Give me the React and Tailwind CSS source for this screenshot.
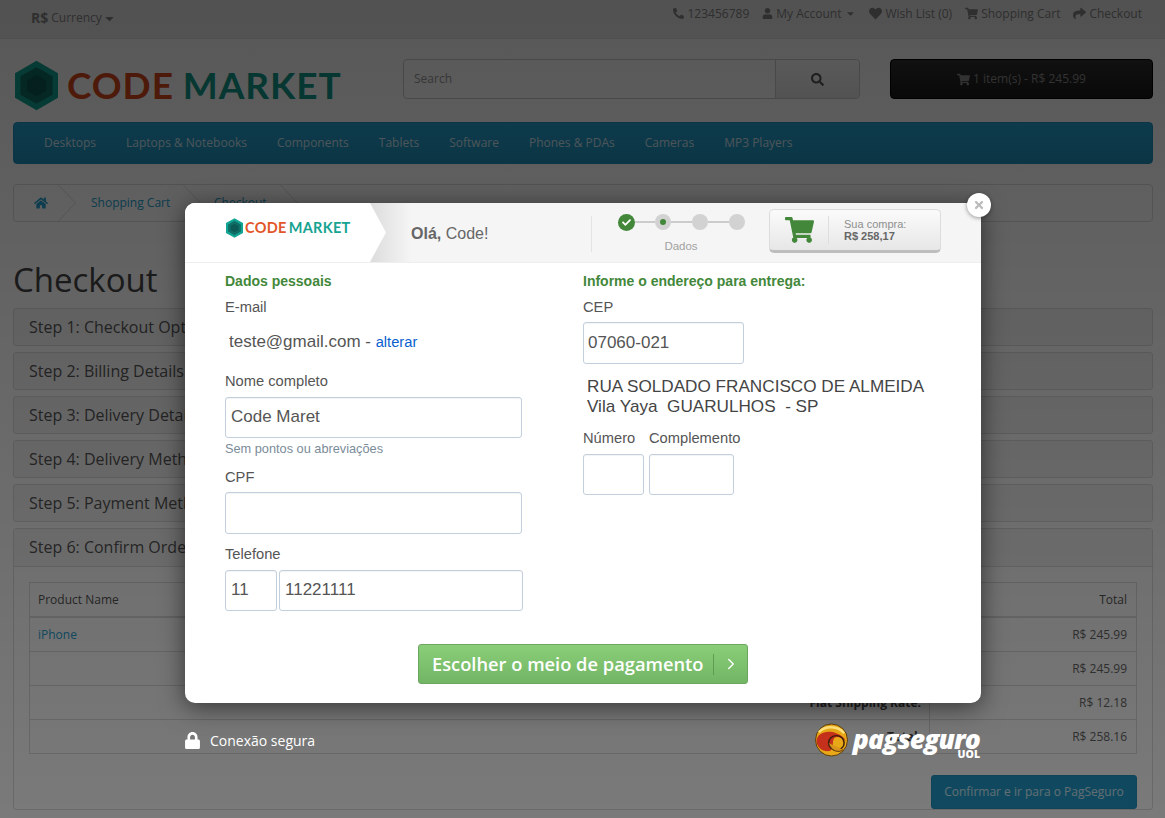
import { ChevronRight } from "lucide-react";
import { FaPhone, FaUser, FaHeart, FaShoppingCart, FaShare, FaHome, FaSearch, FaCheck, FaLock, FaCaretDown, FaTimes } from "react-icons/fa";

const menu = ["Desktops", "Laptops & Notebooks", "Components", "Tablets", "Software", "Phones & PDAs", "Cameras", "MP3 Players"];
const steps = ["Step 1: Checkout Options", "Step 2: Billing Details", "Step 3: Delivery Details", "Step 4: Delivery Method", "Step 5: Payment Method"];
const totals = [
  ["Sub-Total:", "R$ 245.99", "h-[34px] border-b border-[#dddddd]"],
  ["Flat Shipping Rate:", "R$ 12.18", "h-[34px] border-b border-[#dddddd]"],
  ["Total:", "R$ 258.16", "h-[33px]"],
];

const field = "h-full w-full rounded-[3px] border border-[#c3cfdc] bg-white font-['Liberation_Sans',sans-serif] text-[17px] text-[#555] shadow-[inset_0_1px_1px_rgba(0,0,0,0.05)] outline-none";
const fieldLeft = `${field} px-[5px] pb-[2px]`;
const fieldRight = `${field} px-[4px]`;

const Hexagon = ({ className }) => (
  <svg viewBox="0 0 40 46" className={className}>
    <polygon points="20,0 40,11.5 40,34.5 20,46 0,34.5 0,11.5" fill="#12a594" />
    <polygon points="20,6 35,14.5 35,31.5 20,40 5,31.5 5,14.5" fill="#0f6f66" />
    <polygon points="20,13 29,18 29,28 20,33 11,28 11,18" fill="#0c5a55" />
  </svg>
);

const Logo = () => (
  <div className="flex items-center gap-[9px]">
    <Hexagon className="h-[51px] w-[43px]" />
    <div className="-mt-[3px] font-['Lato',sans-serif] text-[37px] leading-none font-bold tracking-[0.9px] whitespace-nowrap">
      <span className="text-[#d9481c]">CODE</span>
      <span className="ml-[9px] text-[#109a8b]">MARKET</span>
    </div>
  </div>
);

const Chevron = ({ className = "" }) => (
  <svg viewBox="0 0 19 38" className={`h-full w-[19px] shrink-0 ${className}`}>
    <polyline points="0,0 18,19 0,38" fill="none" stroke="#dddddd" strokeWidth="1" />
  </svg>
);

const Page = () => (
  <div className="font-['Open_Sans',sans-serif] text-[12px] text-[#666]">
    <div className="flex h-[39px] items-start justify-between border-b border-[#e2e2e2] bg-[#eeeeee] pr-[23px] pl-[31px] text-[#888]">
      <div className="flex items-center gap-[1px] pt-[9px]">
        <b className="mr-[2px] text-[14px] leading-[18px] text-[#888]">R$</b> Currency <FaCaretDown className="text-[13px]" />
      </div>
      <div className="flex items-center gap-[13px] pt-[5px] leading-[17px]">
        <span className="flex items-center gap-[3px]"><FaPhone className="-scale-x-100 text-[11px]" />123456789</span>
        <span className="flex items-center gap-[3px]"><FaUser className="text-[11px]" />My Account <FaCaretDown className="ml-[1px] text-[11px]" /></span>
        <span className="flex items-center gap-[3px]"><FaHeart className="text-[13px]" />Wish List (0)</span>
        <span className="flex items-center gap-[3px]"><FaShoppingCart className="text-[13px]" />Shopping Cart</span>
        <span className="flex items-center gap-[3px]"><FaShare className="text-[13px]" />Checkout</span>
      </div>
    </div>

    <div className="flex h-[83px] items-start pt-[20px] pr-[12px] pl-[15px]">
      <div className="mt-[1px] w-[388px]"><Logo /></div>
      <div className="flex h-[40px] w-[457px] rounded-[4px] border border-[#cccccc] bg-white">
        <div className="flex flex-1 items-center px-[10px] text-[#999]">Search</div>
        <div className="flex w-[84px] items-center justify-center rounded-r-[4px] border-l border-[#cccccc] bg-gradient-to-b from-[#ffffff] to-[#e6e6e6] text-[13px] text-[#555]">
          <FaSearch />
        </div>
      </div>
      <div className="ml-[30px] flex h-[40px] flex-1 items-center justify-center gap-[3px] rounded-[4px] border border-black bg-gradient-to-b from-[#303030] to-[#181818] text-[#8d8d8d]">
        <FaShoppingCart className="text-[13px]" /> 1 item(s) - R$ 245.99
      </div>
    </div>

    <div className="mr-[12px] ml-[13px] flex h-[42px] items-center gap-[30px] rounded-[4px] border border-[#1f90bb] bg-gradient-to-b from-[#23a1d1] to-[#1f90bb] px-[30px] text-[#cfe7f2]">
      {menu.map((item) => <span key={item}>{item}</span>)}
    </div>

    <div className="mt-[20px] mr-[12px] ml-[13px] flex h-[38px] items-center rounded-[4px] border border-[#dddddd] text-[#23a1d1]">
      <div className="flex h-full w-[44px] items-center pl-[20px] text-[14px]"><FaHome /></div>
      <Chevron />
      <span className="ml-[14px] w-[79px] whitespace-nowrap">Shopping Cart</span>
      <Chevron className="ml-[13px]" />
      <span className="ml-[12px] whitespace-nowrap">Checkout</span>
      <Chevron className="ml-[13px]" />
    </div>

    <h1 className="mt-[38px] ml-[13px] text-[33px] leading-[40px] text-[#444]">Checkout</h1>

    <div className="mt-[8px] mr-[12px] ml-[13px] flex flex-col gap-[6px]">
      {steps.map((step) => (
        <div key={step} className="flex h-[38px] items-center rounded-[3px] border border-[#dddddd] bg-[#f5f5f5] px-[15px] text-[16px] text-[#555]">{step}</div>
      ))}
      <div className="rounded-[3px] border border-[#dddddd] bg-white">
        <div className="flex h-[38px] items-center border-b border-[#dddddd] bg-[#f5f5f5] px-[15px] pb-[2px] text-[16px] text-[#555]">Step 6: Confirm Order</div>
        <div className="px-[15px] pt-[15px]">
          <div className="border border-[#dddddd]">
            <div className="flex h-[35px] items-center justify-between border-b-2 border-[#dddddd] pr-[9px] pl-[8px] text-[#555]">
              <span>Product Name</span><span>Total</span>
            </div>
            <div className="flex h-[34px] items-center justify-between border-b border-[#dddddd] pr-[9px] pl-[8px]">
              <span className="text-[#23a1d1]">iPhone</span><span>R$ 245.99</span>
            </div>
            {totals.map(([label, value, row]) => (
              <div key={label} className={`flex items-center ${row}`}>
                <div className="flex h-full flex-1 items-center justify-end border-r border-[#dddddd] px-[8px] font-bold text-[#444]">{label}</div>
                <div className="w-[206px] pr-[9px] text-right">{value}</div>
              </div>
            ))}
          </div>
          <div className="mt-[21px] flex justify-end">
            <div className="flex h-[34px] w-[206px] items-center justify-center rounded-[3px] border border-[#1f90bb] bg-[#229ac8] text-[#cfe7f2]">Confirmar e ir para o PagSeguro</div>
          </div>
        </div>
      </div>
    </div>
  </div>
);

const Steps = () => (
  <div className="flex w-[134px] flex-col">
    <div className="flex items-center">
      <div className="flex h-[17px] w-[17px] items-center justify-center rounded-full bg-[#43883a] text-[9px] text-white"><FaCheck /></div>
      <div className="h-[2px] w-[20px] bg-[#cccccc]" />
      <div className="flex h-[16px] w-[16px] items-center justify-center rounded-full bg-[#d2d2d2]"><div className="h-[6px] w-[6px] rounded-full bg-[#43883a]" /></div>
      <div className="h-[2px] w-[21px] bg-[#cccccc]" />
      <div className="h-[16px] w-[16px] rounded-full bg-[#d2d2d2]" />
      <div className="h-[2px] w-[21px] bg-[#cccccc]" />
      <div className="h-[16px] w-[16px] rounded-full bg-[#d2d2d2]" />
    </div>
    <div className="mt-[8px] pr-[8px] text-center text-[11.5px] leading-[14px] text-[#a2a2a2]">Dados</div>
  </div>
);

const ModalHeader = () => (
  <div className="flex h-[60px] border-b border-[#eeeeee] bg-[#f5f5f5]">
    <div className="flex w-[226px] shrink-0 bg-gradient-to-r from-[#dcdcdc] to-[#f5f5f5] [background-position:185px_0] [background-size:41px_100%] [background-repeat:no-repeat]">
      <div className="flex w-[201px] items-start bg-white pt-[15px] pl-[41px] [clip-path:polygon(0_0,185px_0,201px_50%,185px_100%,0_100%)]">
        <div className="flex items-center gap-[2px]">
          <Hexagon className="h-[20px] w-[17px]" />
          <div className="font-['Lato',sans-serif] text-[14.5px] leading-none font-bold tracking-[0.3px] whitespace-nowrap">
            <span className="text-[#e2562a]">CODE</span>
            <span className="ml-[2px] text-[#17a392]">MARKET</span>
          </div>
        </div>
      </div>
    </div>
    <div className="flex flex-1 items-center font-['Liberation_Sans',sans-serif]">
      <div className="w-[180px] pt-[2px] text-[16px] text-[#666]"><b>Olá,</b> Code!</div>
      <div className="mt-[2px] mr-[26px] h-[36px] w-px bg-[#e3e3e3]" />
      <div className="flex flex-col pt-[1px]"><Steps /></div>
      <div className="-mt-[4px] ml-[17px] flex h-[44px] w-[172px] items-center rounded-[5px] border border-b-[3px] border-[#dcdcdc] border-b-[#bdbdbd] bg-gradient-to-b from-[#fbfbfb] to-[#e7e7e7] pl-[15px]">
        <FaShoppingCart className="h-[26px] w-[29px] text-[#43883a]" />
        <div className="mr-[15px] ml-[14px] h-[28px] w-px bg-[#dedede]" />
        <div className="text-[11px] leading-[12px] text-[#8f8f8f]">
          Sua compra:
          <div className="font-bold text-[#666]">R$ 258,17</div>
        </div>
      </div>
    </div>
  </div>
);

const Label = ({ children, className = "" }) => (
  <div className={`text-[14.7px] leading-[16px] text-[#555] ${className}`}>{children}</div>
);

const ModalBody = () => (
  <div className="flex px-[40px] pt-[10px] font-['Liberation_Sans',sans-serif]">
    <div className="w-[358px]">
      <div className="text-[14px] leading-[16px] font-bold text-[#43883a]">Dados pessoais</div>
      <Label className="mt-[10px]">E-mail</Label>
      <div className="mt-[17px] pl-[4px] text-[17px] leading-[20px] text-[#555]">
        teste@gmail.com - <span className="text-[14.7px] text-[#0a5fd0]">alterar</span>
      </div>
      <Label className="mt-[21px]">Nome completo</Label>
      <div className="mt-[8px] h-[41px] w-[297px]"><input className={fieldLeft} defaultValue="Code Maret" /></div>
      <div className="mt-[4px] text-[12.75px] leading-[14px] text-[#7b8c99]">Sem pontos ou abreviações</div>
      <Label className="mt-[13px]">CPF</Label>
      <div className="mt-[7px] h-[42px] w-[297px]"><input className={fieldLeft} /></div>
      <Label className="mt-[12px]">Telefone</Label>
      <div className="mt-[8px] flex h-[41px] w-[298px] gap-[2px]">
        <div className="w-[52px]"><input className={fieldLeft} defaultValue="11" /></div>
        <div className="flex-1"><input className={fieldLeft} defaultValue="11221111" /></div>
      </div>
    </div>
    <div className="flex-1">
      <div className="text-[14px] leading-[16px] font-bold text-[#43883a]">Informe o endereço para entrega:</div>
      <Label className="mt-[10px]">CEP</Label>
      <div className="mt-[7px] h-[42px] w-[161px]"><input className={fieldRight} defaultValue="07060-021" /></div>
      <div className="mt-[12px] pl-[4px] text-[17.15px] leading-[20px] text-[#444] whitespace-pre">
        RUA SOLDADO FRANCISCO DE ALMEIDA{"\n"}Vila Yaya  GUARULHOS  - SP
      </div>
      <div className="mt-[14px] flex gap-[5px] text-[14.7px] leading-[16px] text-[#555]">
        <span className="w-[61px]">Número</span><span>Complemento</span>
      </div>
      <div className="mt-[8px] flex h-[41px] gap-[5px]">
        <div className="w-[61px]"><input className={fieldRight} /></div>
        <div className="w-[85px]"><input className={fieldRight} /></div>
      </div>
    </div>
  </div>
);

const PagSeguro = () => (
  <div className="flex items-start gap-[5px]">
    <svg viewBox="0 0 34 34" className="h-[34px] w-[33px]">
      <circle cx="17" cy="17" r="16.5" fill="#e8a817" stroke="#5a3a0c" strokeWidth="1" />
      <path d="M4 9 C10 2 24 2 30 10" fill="none" stroke="#ffe27a" strokeWidth="2.5" />
      <path d="M1.5 18 C2 10 12 6 22 10 C26 11.5 30 14 32 18 C28 14 22 13 20 15 C17 18 20 24 16 28 C10 30 2 26 1.5 18Z" fill="#c4301b" />
      <ellipse cx="22" cy="20" rx="8" ry="7.5" fill="none" stroke="#3a1c0a" strokeWidth="1.5" />
      <path d="M14 20 C16 28 24 31 29 27" fill="#d8951a" stroke="#3a1c0a" strokeWidth="0.8" />
    </svg>
    <div className="relative mt-[4px] h-[24px] font-['Open_Sans',sans-serif] text-[26.5px] leading-[24px] font-extrabold tracking-[-0.9px] text-white italic">
      pagseguro
      <span className="absolute top-[22px] right-0 text-[10.5px] leading-[10px] font-extrabold tracking-[0] not-italic">UOL</span>
    </div>
  </div>
);

const Modal = () => (
  <div className="absolute top-[203px] left-[185px] w-[796px]">
    <div className="relative h-[500px] rounded-[10px] bg-white shadow-[0_4px_24px_rgba(0,0,0,0.55)]">
      <div className="overflow-hidden rounded-t-[10px]"><ModalHeader /></div>
      <ModalBody />
      <div className="absolute top-[441px] left-[233px] flex h-[40px] w-[330px] items-center rounded-[3px] border border-[#6ba560] bg-gradient-to-b from-[#8ace78] to-[#72b565] pl-[13px] font-['Open_Sans',sans-serif] text-[18.3px] font-semibold text-white">
        <span className="w-[281px] whitespace-nowrap">Escolher o meio de pagamento</span>
        <span className="h-[21px] w-px bg-[#5f9c53]" />
        <ChevronRight className="ml-[8px] h-[18px] w-[18px]" strokeWidth={1.8} />
      </div>
      <div className="absolute -top-[10px] -right-[10px] flex h-[24px] w-[24px] items-center justify-center rounded-full bg-white text-[12px] text-[#bbbbbb] shadow-[0_1px_4px_rgba(0,0,0,0.4)]">
        <FaTimes />
      </div>
    </div>
    <div className="mt-[20px] flex items-start justify-between pr-[1px]">
      <div className="mt-[7px] flex items-center gap-[9px] font-['Open_Sans',sans-serif] text-[14px] text-white">
        <FaLock className="-ml-[1px] text-[17px]" /> Conexão segura
      </div>
      <PagSeguro />
    </div>
  </div>
);

export default function App() {
  return (
    <div className="relative h-[818px] w-full overflow-hidden bg-white">
      <Page />
      <div className="absolute inset-0 bg-gradient-to-b from-[rgba(0,0,0,0.66)] to-[rgba(0,0,0,0.52)]" />
      <Modal />
    </div>
  );
}
